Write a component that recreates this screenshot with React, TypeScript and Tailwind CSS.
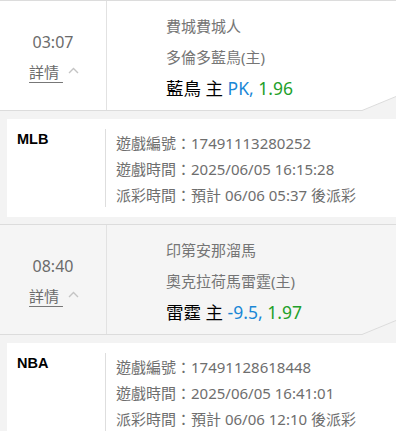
import React from "react";

type Item = {
  time: string;
  away: string;
  home: string;
  pickTeam: string;
  line: string;
  odds: string;
  league: string;
  gameNo: string;
  gameTime: string;
  payout: string;
  active?: boolean;
};

const items: Item[] = [
  {
    time: "03:07",
    away: "費城費城人",
    home: "多倫多藍鳥(主)",
    pickTeam: "藍鳥",
    line: "PK",
    odds: "1.96",
    league: "MLB",
    gameNo: "17491113280252",
    gameTime: "2025/06/05 16:15:28",
    payout: "預計 06/06 05:37 後派彩",
    active: true,
  },
  {
    time: "08:40",
    away: "印第安那溜馬",
    home: "奧克拉荷馬雷霆(主)",
    pickTeam: "雷霆",
    line: "-9.5",
    odds: "1.97",
    league: "NBA",
    gameNo: "17491128618448",
    gameTime: "2025/06/05 16:41:01",
    payout: "預計 06/06 12:10 後派彩",
  },
];

function Chevron() {
  return (
    <svg width="11" height="7" viewBox="0 0 11 7" className="ml-[5px] mb-[3px]">
      <path d="M1 6 L5.5 1.5 L10 6" fill="none" stroke="#c4c4c4" strokeWidth="1.4" />
    </svg>
  );
}

function Row({ it }: { it: Item }) {
  return (
    <div>
      <div
        className={`relative flex h-[111px] border-t border-b border-[#dcdcdc] ${
          it.active ? "bg-white" : "bg-[#f5f5f5]"
        }`}
      >
        <div className="flex w-[107px] shrink-0 flex-col items-center border-r border-[#e2e2e2] pt-[26px]">
          <div className="text-[16px] leading-[30px] text-[#6b6b6b]">{it.time}</div>
          <div className="flex items-center pl-[2px] leading-[30px]">
            <span className="text-[15px] text-[#6b6b6b] underline underline-offset-[4px] decoration-[#777]">
              詳情&nbsp;
            </span>
            <Chevron />
          </div>
        </div>
        <div className="flex flex-col pl-[59px] pt-[10px]">
          <div className="text-[15px] leading-[31px] text-[#757575]">{it.away}</div>
          <div className="text-[15px] leading-[31px] text-[#757575]">{it.home}</div>
          <div className="text-[17.5px] leading-[31px] text-black">
            {it.pickTeam} 主 <span className="text-[#1a87d6]">{it.line},</span>{" "}
            <span className="text-[#22a02a]">{it.odds}</span>
          </div>
        </div>
        <svg
          className="absolute right-0 bottom-[-1px]"
          width="34"
          height="15"
          viewBox="0 0 34 15"
        >
          <polygon points="0,14.5 34,0.5 34,15 0,15" fill="#f3f3f3" />
          <line x1="0" y1="14.5" x2="34" y2="0.5" stroke="#dcdcdc" strokeWidth="1" />
        </svg>
      </div>
      <div className="pl-[7px] pt-[8px] pb-[7px]">
        <div className="flex h-[98px] bg-white">
          <div className="w-[98px] shrink-0 pl-[10px] pt-[10px] font-['Liberation_Sans',sans-serif] text-[14.5px] font-bold leading-[21px] text-black">
            {it.league}
          </div>
          <div className="my-[10px] flex flex-col border-l border-[#dedede] pl-[10px] pt-[1px] text-[15px] leading-[26px] text-[#6e6e6e]">
            <div>遊戲編號：{it.gameNo}</div>
            <div>遊戲時間：{it.gameTime}</div>
            <div>派彩時間：{it.payout}</div>
          </div>
        </div>
      </div>
    </div>
  );
}

export default function App() {
  return (
    <div className="h-[431px] w-[396px] overflow-hidden bg-[#f3f3f3] font-['Noto_Sans','Noto_Sans_CJK_TC',sans-serif]">
      {items.map((it) => (
        <Row key={it.gameNo} it={it} />
      ))}
    </div>
  );
}
